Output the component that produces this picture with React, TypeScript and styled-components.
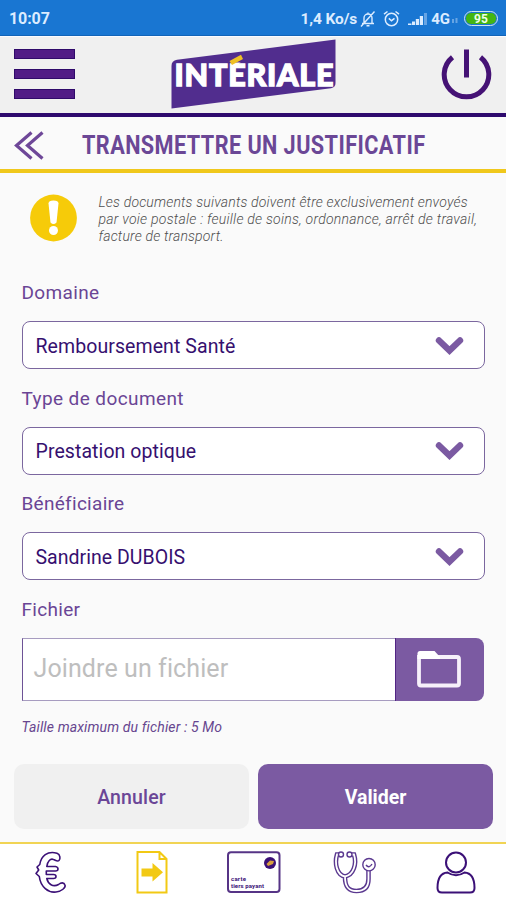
import React from "react";
import styled, { createGlobalStyle } from "styled-components";

const INK = "#3b1077";
const PURPLE = "#7b5aa2";
const YELLOW = "#f6cb09";

const GlobalStyle = createGlobalStyle`
  *, *::before, *::after { box-sizing: border-box; }
  body { margin: 0; background: #fafafa; font-family: Roboto, "Liberation Sans", sans-serif; }
  button { font: inherit; border: 0; padding: 0; background: none; display: block; }
`;

const Screen = styled.div`
  width: 506px;
  height: 900px;
  display: flex;
  flex-direction: column;
  background: #fafafa;
  overflow: hidden;
`;

const StatusBar = styled.div`
  height: 36px;
  flex: none;
  display: flex;
  align-items: center;
  justify-content: space-between;
  padding: 2px 8px 0 9px;
  background: #1976d2;
  border-bottom: 1px solid #1264b8;
  color: #dcecff;
`;

const Clock = styled.span`
  font-size: 16px;
  font-weight: 700;
  letter-spacing: -0.1px;
`;

const StatusIcons = styled.div`
  display: flex;
  align-items: center;
`;

const StatusText = styled.span<{ $size: number; $gap: number; $track?: number }>`
  font-size: ${(p) => p.$size}px;
  font-weight: 700;
  letter-spacing: ${(p) => p.$track ?? 0}px;
  margin-right: ${(p) => p.$gap}px;
`;

const StatusGlyph = styled.svg<{ $gap: number }>`
  display: block;
  margin-right: ${(p) => p.$gap}px;
`;

const Battery = styled.span`
  width: 34px;
  height: 15px;
  padding: 1px;
  border: 1.5px solid #cfe6ee;
  border-radius: 8px;
`;

const BatteryLevel = styled.span`
  display: flex;
  align-items: center;
  justify-content: center;
  height: 100%;
  border-radius: 5px;
  background: #43b512;
  color: #f0ffe8;
  font-size: 12px;
  font-weight: 700;
  line-height: 10px;
`;

const Header = styled.header`
  height: 81px;
  flex: none;
  display: flex;
  justify-content: space-between;
  padding: 2px 14px 0 14px;
  background: #f0f0f0;
  border-top: 1px solid #fbfbff;
  border-bottom: 4px solid #2e0a6e;
`;

const MenuButton = styled.button`
  width: 61px;
  height: 50px;
  margin-top: 10.4px;
  display: flex;
  flex-direction: column;
  justify-content: space-between;
`;

const MenuBar = styled.span`
  height: 10px;
  border: 1.5px solid #300a6a;
  background: #511c86;
`;

const Logo = styled.svg`
  display: block;
  margin-right: 7px;
`;

const LogoText = styled.text`
  font-family: Lato, "Open Sans", sans-serif;
  font-weight: 900;
  font-size: 30.5px;
`;

const PowerButton = styled.button`
  margin-top: 7px;
  width: 52px;
  height: 56px;
`;

const TitleBar = styled.div`
  height: 56px;
  flex: none;
  display: flex;
  align-items: center;
  padding: 3px 0 0 14px;
  border-bottom: 4px solid #f0c81c;
`;

const Title = styled.h1`
  margin: 2px 0 0 38px;
  font-size: 25px;
  line-height: 30px;
  font-weight: 700;
  letter-spacing: 0.48px;
  color: #6b4796;
  white-space: nowrap;
  transform: scaleX(0.867);
  transform-origin: left center;
`;

const Content = styled.main`
  flex: 1;
  padding: 21px 20.5px 0 21.5px;
`;

const Notice = styled.section`
  height: 80px;
  display: flex;
  padding-left: 8px;
`;

const NoticeText = styled.p`
  margin: 0 0 0 22px;
  font-size: 14px;
  line-height: 17px;
  font-style: italic;
  font-weight: 300;
  color: #4e4e4e;
  white-space: nowrap;
`;

const Line = styled.span<{ $track: number }>`
  display: block;
  letter-spacing: ${(p) => p.$track}px;
`;

const Field = styled.div`
  height: 105.5px;
`;

const Label = styled.div<{ $track: number }>`
  height: 47px;
  padding-top: 7px;
  font-size: 19px;
  line-height: 24px;
  letter-spacing: ${(p) => p.$track}px;
  color: #6a4595;
`;

const Select = styled.div`
  width: 463.5px;
  height: 48px;
  display: flex;
  align-items: center;
  justify-content: space-between;
  padding: 1px 18.5px 0 13px;
  border: 1.5px solid #7b679f;
  border-radius: 8px;
  background: #fff;
`;

const SelectValue = styled.span<{ $track: number }>`
  padding-top: 1px;
  font-size: 19.5px;
  letter-spacing: ${(p) => p.$track}px;
  color: #36106f;
`;

const FileRow = styled.div`
  height: 63px;
  display: flex;
  width: 462.5px;
`;

const FileInput = styled.div`
  width: 373px;
  padding: 15px 0 0 11px;
  border: 1.5px solid #a79cc0;
  border-left-color: #6d5296;
  border-right: 0;
  background: #fff;
  font-size: 25px;
  line-height: 29px;
  letter-spacing: 0.1px;
  color: #bebebe;
`;

const BrowseButton = styled.button`
  flex: 1;
  display: flex;
  align-items: center;
  justify-content: center;
  padding-right: 1px;
  border-left: 1.5px solid #522484;
  border-radius: 0 8px 8px 0;
  background: ${PURPLE};
`;

const Hint = styled.div`
  margin-top: 17px;
  font-size: 14px;
  line-height: 18px;
  font-style: italic;
  letter-spacing: 0.13px;
  color: #67468f;
`;

const Actions = styled.div`
  flex: none;
  height: 78.5px;
  display: grid;
  grid-template-columns: 235px 235px;
  grid-template-rows: 65px;
  column-gap: 9px;
  padding-left: 14px;
`;

const ActionButton = styled.button<{ $primary?: boolean }>`
  padding-top: 2px;
  border-radius: 10px;
  background: ${(p) => (p.$primary ? PURPLE : "#f0f0f0")};
  color: ${(p) => (p.$primary ? "#fff" : "#6b4697")};
  font-size: 19.5px;
  font-weight: ${(p) => (p.$primary ? 700 : 500)};
  letter-spacing: ${(p) => (p.$primary ? 0 : 0.15)}px;
`;

const BottomNav = styled.nav`
  flex: none;
  height: 58px;
  display: grid;
  grid-template-columns: repeat(5, 101.2px);
  justify-items: center;
  padding-top: 7px;
  border-top: 2px solid #f1d454;
  background: #fff;
`;

const NavIcon = styled.svg`
  display: block;
  overflow: visible;
`;

const CardText = styled.text`
  font-family: Roboto, sans-serif;
  font-size: 6px;
  font-weight: 700;
  fill: ${INK};
`;

const Chevron = () => (
  <svg width="32" height="22" viewBox="0 0 32 22">
    <path d="M5 5.500 15.500 15.500 26 5.500" fill="none" stroke={PURPLE} strokeWidth="6.4" strokeLinecap="round" />
  </svg>
);

const fields = [
  { label: "Domaine", value: "Remboursement Santé", lt: 0.35, vt: 0.08 },
  { label: "Type de document", value: "Prestation optique", lt: 0.4, vt: 0.08 },
  { label: "Bénéficiaire", value: "Sandrine DUBOIS", lt: 0.28, vt: 0.03 },
];

const notice = [
  { text: "Les documents suivants doivent être exclusivement envoyés", track: 0.18 },
  { text: "par voie postale : feuille de soins, ordonnance, arrêt de travail,", track: 0.25 },
  { text: "facture de transport.", track: 0.18 },
];

export default function App() {
  return (
    <>
      <GlobalStyle />
      <Screen>
        <StatusBar>
          <Clock>10:07</Clock>
          <StatusIcons>
            <StatusText $size={15.5} $gap={3} $track={-0.1}>1,4 Ko/s</StatusText>
            <StatusGlyph $gap={7} width="16" height="18" viewBox="0 0 16 18" fill="none" stroke="currentColor" strokeWidth="1.4">
              <path d="M2 13.5h12M4 13V8a4 4 0 0 1 8 0v5M8 4V2.5M6.5 15.8h3M1 16.5 14.5 1.5" />
            </StatusGlyph>
            <StatusGlyph $gap={8} width="17" height="18" viewBox="0 0 17 18" fill="none" stroke="currentColor" strokeWidth="1.5">
              <circle cx="8.5" cy="9.5" r="6.2" />
              <path d="m1 4.2 3.5-2.7M16 4.2l-3.5-2.7M5.8 8.4l2.7 2.3 3-2.3" />
            </StatusGlyph>
            <StatusGlyph $gap={4} width="19" height="15" viewBox="0 0 19 15" fill="currentColor">
              <path d="M0 12.500h3.500V14H0zM4 10.500h3V14H4zM7.800 8H11v6H7.800zM11.800 5H15v9h-3.200z" />
              <path d="M16 2h3v12h-3z" opacity=".4" />
            </StatusGlyph>
            <StatusText $size={15} $gap={2}>4G</StatusText>
            <StatusGlyph $gap={6} width="6" height="8" viewBox="0 0 6 8" fill="currentColor" opacity=".4">
              <path d="M0 4h2v4H0zM3.500 3h2v5h-2z" />
            </StatusGlyph>
            <Battery><BatteryLevel>95</BatteryLevel></Battery>
          </StatusIcons>
        </StatusBar>

        <Header>
          <MenuButton aria-label="Menu"><MenuBar /><MenuBar /><MenuBar /></MenuButton>
          <Logo width="166" height="71" viewBox="171 39 166 71">
            <path d="M171.500 108.500V66Q171.500 60.500 177 59.700L335.500 39.500V83Q335.500 87.500 331 88.200Z" fill="#512d8e" />
            <LogoText x="174.500" y="85.500" textLength="159" lengthAdjust="spacing" fill="#fff" stroke="#fff" strokeWidth="1.300">INTÉRIALE</LogoText>
            <path d="M226 55.500 247 53V62.600H226Z" fill="#512d8e" />
            <path d="M229.500 61 241 54.700 243 59 232 65Z" fill="#efc025" />
          </Logo>
          <PowerButton aria-label="Déconnexion">
            <svg width="52" height="56" viewBox="440 46 52 56" fill="none" stroke="#451275" strokeWidth="5">
              <path d="M452.500 57.200a22.300 22.300 0 1 0 28 0M466.500 49.500v28" />
            </svg>
          </PowerButton>
        </Header>

        <TitleBar>
          <svg width="30" height="30" viewBox="14 130 30 30" fill="none" stroke="#6e4798" strokeWidth="3.200">
            <path d="M31.500 132.500 16.500 145.500 31.500 158.500M42.500 132.500 27.500 145.500 42.500 158.500" />
          </svg>
          <Title>TRANSMETTRE UN JUSTIFICATIF</Title>
        </TitleBar>

        <Content>
          <Notice>
            <svg width="47" height="48" viewBox="0 0 47 48">
              <circle cx="23.500" cy="24" r="23.400" fill={YELLOW} />
              <path d="M18.500 9.500Q18.500 6.500 23.500 6.500T28.500 9.500L26.500 28.500Q23.500 31.500 20.500 28.500Z" fill="#fff" />
              <circle cx="23.500" cy="36.500" r="4.500" fill="#fff" />
            </svg>
            <NoticeText>
              {notice.map((l) => <Line key={l.text} $track={l.track}>{l.text}</Line>)}
            </NoticeText>
          </Notice>
          {fields.map((f) => (
            <Field key={f.label}>
              <Label $track={f.lt}>{f.label}</Label>
              <Select>
                <SelectValue $track={f.vt}>{f.value}</SelectValue>
                <Chevron />
              </Select>
            </Field>
          ))}
          <Label $track={0.3}>Fichier</Label>
          <FileRow>
            <FileInput>Joindre un fichier</FileInput>
            <BrowseButton aria-label="Parcourir">
              <svg width="46" height="38" viewBox="0 0 46 38">
                <path d="M3 5v28.500q0 2 2 2h36q2 0 2-2V9q0-2-2-2H5" fill="none" stroke="#f6f0fa" strokeWidth="3.800" />
                <path d="M1.500 9V3.500Q1.500 1 4 1h14.500L24 7v2Z" fill="#fff" />
              </svg>
            </BrowseButton>
          </FileRow>
          <Hint>Taille maximum du fichier : 5 Mo</Hint>
        </Content>

        <Actions>
          <ActionButton>Annuler</ActionButton>
          <ActionButton $primary>Valider</ActionButton>
        </Actions>

        <BottomNav>
          <NavIcon width="32" height="42" viewBox="35.500 851 32 42" fill="none" stroke={INK} strokeWidth="1.600" strokeLinejoin="round">
            <path d="M59.500 860.500C61 859 61 854.500 57.500 853.200C48 850.500 41.500 856 40.300 864.500L37.500 867 39.200 870 36.500 873.500 39.800 876.500C41 887 49 893 56.500 892C62 891.500 66.500 887.500 65.500 885C64.500 882 61.500 882.500 59 884.500C53.500 887.500 48.500 884 47.300 878.500H54Q56.500 878.500 56.500 876.500T54 874.500H46.800V871H56Q58.500 871 58.500 869T56 866.500H47.300C48 861 51 858.200 54 859.500C56.500 860.500 58 862 59.500 860.500Z" />
          </NavIcon>
          <NavIcon width="32" height="43" viewBox="136.500 851 32 43">
            <path d="M138 852H160L167 859V892.500H138ZM160 852V859H167" fill="none" stroke="#f2c914" strokeWidth="2" />
            <path d="M142 868.500H153V863L163.500 872.300 153 881.500V876.500H142Z" fill="#f2c914" />
          </NavIcon>
          <NavIcon width="54" height="43" viewBox="226 851 54 43">
            <rect x="228" y="852.300" width="51.500" height="39.700" rx="3" fill="#fff" stroke="#563486" strokeWidth="2" />
            <circle cx="270" cy="863" r="6" fill={INK} />
            <path d="M266.500 864 270 860.500 274 861 273 864 268 866Z" fill="#d9a03e" />
            <CardText x="231" y="881" textLength="15">carte</CardText>
            <CardText x="231" y="888" textLength="33">tiers payant</CardText>
          </NavIcon>
          <NavIcon width="44" height="43" viewBox="332.500 851 44 43" fill="none">
            <path d="M342 854.500H337.500C335 863 337 875 345.500 876.500C354 875 357.500 864 354.500 854.500H350.500M345.500 877C345.500 887 349 891 357 891C366 891 369 886 369 879V870" stroke="#5b3990" strokeWidth="4.600" />
            <path d="M342 854.500H337.500C335 863 337 875 345.500 876.500C354 875 357.500 864 354.500 854.500H350.500M345.500 877C345.500 887 349 891 357 891C366 891 369 886 369 879V870" stroke="#fff" strokeWidth="1.800" />
            <g fill="#fff" stroke="#5b3990" strokeWidth="1.400">
              <circle cx="341.500" cy="854.500" r="2.500" />
              <circle cx="350" cy="854.500" r="2.500" />
              <circle cx="369.500" cy="864.700" r="6.200" />
              <path d="M366.500 865Q369.500 869 372.500 864" />
            </g>
          </NavIcon>
          <NavIcon width="40" height="43" viewBox="435 851 40 43" fill="none" stroke={INK} strokeWidth="2">
            <circle cx="456" cy="862.500" r="10" />
            <path d="M447.500 872.500C440 873 437.500 880 437.500 888Q437.500 892.500 442 892.500H470Q474.500 892.500 474.500 888C474.500 880 472 873 464.500 872.500Q456 878 447.500 872.500Z" />
          </NavIcon>
        </BottomNav>
      </Screen>
    </>
  );
}
